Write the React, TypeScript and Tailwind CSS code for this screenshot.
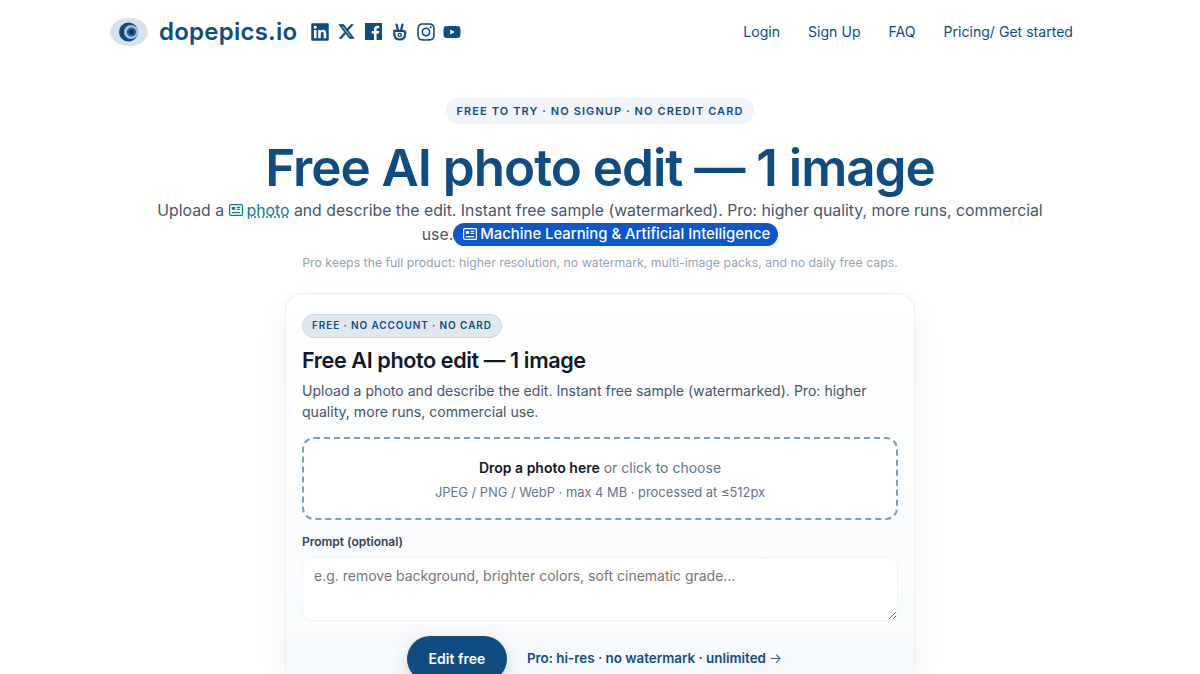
import { FaInstagram, FaLinkedin, FaYoutube } from "react-icons/fa";
import { FaXTwitter } from "react-icons/fa6";

const font = { fontFamily: "Inter, 'Noto Sans', sans-serif" };

function LogoEye() {
  return (
    <svg width="38" height="28" viewBox="0 0 38 28" className="shrink-0">
      <ellipse cx="19" cy="14" rx="19" ry="14" fill="#d8e0e8" />
      <circle cx="18.5" cy="14" r="9.5" fill="#0f4c81" />
      <circle cx="21" cy="14" r="7" fill="#a9c4da" />
      <circle cx="21.5" cy="14" r="4.6" fill="#24609a" />
      <circle cx="21.5" cy="14" r="2.2" fill="#0a2f55" />
    </svg>
  );
}

function NewsIcon({ className }: { className: string }) {
  return (
    <svg viewBox="0 0 16 16" width="16" height="16" fill="none" stroke="currentColor" strokeWidth="1.2" className={className}>
      <rect x="1.6" y="2.6" width="12.8" height="10.8" rx="1" />
      <rect x="3.8" y="5" width="3.4" height="2.8" fill="currentColor" stroke="none" />
      <path d="M8.8 5.4h3.4M8.8 7.4h3.4M3.8 10.6h8.4" />
    </svg>
  );
}

function FacebookIcon() {
  return (
    <svg viewBox="0 0 17 17" width="17" height="17">
      <path
        fillRule="evenodd"
        fill="#0f4c81"
        d="M0 0h17v17h-5.4v-6.4h2.2l.4-2.6h-2.6V6.5c0-.8.3-1.3 1.4-1.3h1.3V2.9c-.3 0-1-.1-1.9-.1-2 0-3.4 1.2-3.4 3.4V8H6.7v2.6H9V17H0z"
      />
    </svg>
  );
}

function HandIcon() {
  return (
    <svg viewBox="0 0 15 18" width="15" height="18" fill="none" stroke="#0f4c81" strokeWidth="2.2" strokeLinecap="round">
      <path d="M4.5 1.5l1.5 6M10.5 1.5L9 7.5" />
      <path d="M2 7.8h8.5c1.8 0 2.8 1 2.8 2.4" />
      <path d="M2.2 9.5c0 4.8 1.8 7 5.3 7s5.6-2.4 5.6-6" />
      <circle cx="7.8" cy="12" r="1.6" strokeWidth="1.4" />
    </svg>
  );
}

function SocialIcon({ children }: { children: React.ReactNode }) {
  return <span className="flex h-[18px] w-[18px] items-center justify-center">{children}</span>;
}

export default function App() {
  return (
    <div className="h-[674px] overflow-hidden bg-white text-[#475569]" style={font}>
      <header className="flex h-[63px] items-center justify-between pl-[110px] pr-[127px]">
        <div className="flex items-center">
          <LogoEye />
          <span className="ml-[11px] text-[24px] font-semibold tracking-[0.01em] text-[#0f4c81]">dopepics.io</span>
          <div className="ml-[14px] flex items-center gap-[8.4px] text-[#0f4c81]">
            <SocialIcon><FaLinkedin size={20} /></SocialIcon>
            <SocialIcon><FaXTwitter size={17} className="stroke-[#0f4c81] stroke-[20]" /></SocialIcon>
            <SocialIcon><FacebookIcon /></SocialIcon>
            <SocialIcon><HandIcon /></SocialIcon>
            <SocialIcon><FaInstagram size={20} /></SocialIcon>
            <SocialIcon><FaYoutube size={18} className="shrink-0" /></SocialIcon>
          </div>
        </div>
        <nav className="flex items-center gap-7 text-[14.08px] text-[#0f4c81]">
          <a>Login</a>
          <a>Sign Up</a>
          <a>FAQ</a>
          <a>Pricing/ Get started</a>
        </nav>
      </header>

      <main className="flex flex-col items-center pt-[35px]">
        <div className="flex h-[26px] items-center rounded-full bg-[#f1f5f9] px-[10px] text-[11px] font-semibold tracking-[0.1em] text-[#0f4c81]">
          FREE TO TRY · NO SIGNUP · NO CREDIT CARD
        </div>
        <h1 className="mt-[13px] text-[51.2px] leading-[60px] font-semibold tracking-[-0.02em] text-[#0f4c81]">
          Free AI photo edit — 1 image
        </h1>
        <p className="mt-[2px] w-[900px] text-center text-[15.8px] leading-[24px] text-[#475569]">
          Upload a <NewsIcon className="inline align-[-2px] text-[#0f7c8c]" />
          <span className="ml-[2px] text-[#0f7c8c] underline decoration-dotted">photo</span> and describe the edit. Instant free sample (watermarked). Pro: higher quality, more runs, commercial use.
          <span className="-my-[2px] inline-flex h-[23px] items-center gap-[2.5px] rounded-full bg-[#0b57d0] pr-[8px] pl-[8.5px] align-[-2px] text-[14.85px] font-medium text-white">
            <NewsIcon className="text-white" />
            Machine Learning &amp; Artificial Intelligence
          </span>
        </p>
        <p className="mt-[7px] text-[12.3px] leading-[18px] text-[#98a2b3]">
          Pro keeps the full product: higher resolution, no watermark, multi-image packs, and no daily free caps.
        </p>

        <section className="mt-[21px] w-[630px] shrink-0 rounded-[18px] border border-[#e9eef4] bg-gradient-to-b from-white to-[#f7fafc] px-[16px] pt-[17px] shadow-[0_12px_32px_rgba(15,23,42,0.06)]">
          <span className="inline-flex h-[24px] items-center rounded-full border border-[#cbd5e1] bg-[#e2e8f0] px-[9px] text-[10px] font-semibold tracking-[0.09em] text-[#0f4c81]">
            FREE · NO ACCOUNT · NO CARD
          </span>
          <h2 className="mt-[7px] text-[21.6px] leading-[30px] font-semibold tracking-[-0.018em] text-[#0f172a]">
            Free AI photo edit — 1 image
          </h2>
          <p className="mt-[5px] w-[580px] text-[14.08px] leading-[21px] text-[#475569]">
            Upload a photo and describe the edit. Instant free sample (watermarked). Pro: higher quality, more runs, commercial use.
          </p>
          <div className="mt-[15px] flex h-[83px] flex-col items-center justify-center rounded-[12px] border-2 border-dashed border-[#7c9cb8] bg-white pt-[2px]">
            <p className="text-[14px] leading-[21px] text-[#64748b]">
              <strong className="font-semibold text-[#0f172a]">Drop a photo here</strong> or click to choose
            </p>
            <p className="mt-[6px] text-[12.9px] leading-[18px] text-[#64748b]">JPEG / PNG / WebP · max 4 MB · processed at ≤512px</p>
          </div>
          <label className="mt-[13px] block text-[12px] leading-[18px] font-semibold text-[#334155]">Prompt (optional)</label>
          <textarea
            placeholder="e.g. remove background, brighter colors, soft cinematic grade..."
            className="mt-[6px] block h-[64px] w-full rounded-[10px] border border-[#eef2f6] bg-white px-[11px] py-[7px] text-[14px] leading-[21px] placeholder:text-[#757575]"
          />
          <div className="mt-[15px] flex items-center justify-center gap-[20px] pr-[11px]">
            <button className="h-[46px] w-[100px] rounded-full bg-[#0f4c81] text-[14px] font-semibold text-white shadow-[0_6px_16px_rgba(15,76,129,0.2)]">
              Edit free
            </button>
            <a className="text-[13.4px] font-semibold text-[#0f4c81]">
              Pro: hi-res · no watermark · unlimited <span className="font-normal text-[#475569]">→</span>
            </a>
          </div>
        </section>
      </main>
    </div>
  );
}
